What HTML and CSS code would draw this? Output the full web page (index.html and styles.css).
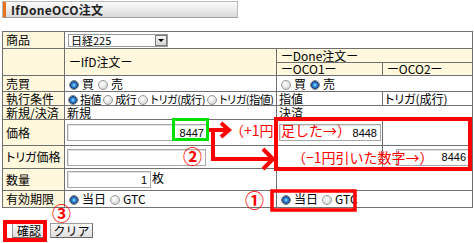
FILE: index.html
```html
<!DOCTYPE html>
<html lang="ja">
<head>
<meta charset="utf-8">
<title>IfDoneOCO注文</title>
<link rel="stylesheet" href="styles.css">
</head>
<body>
<div class="page">
  <div class="titlebar"><span class="title">IfDoneOCO注文</span></div>

  <table class="order">
    <colgroup>
      <col class="c-label"><col class="c-ifd"><col class="c-oco1"><col class="c-oco2">
    </colgroup>
    <tr class="r-item">
      <th>商品</th>
      <td colspan="3"><div class="select"><span class="sel-text">日経225</span><span class="sel-btn"><span class="tri"></span></span></div></td>
    </tr>
    <tr class="r-h1">
      <th rowspan="2"></th>
      <td rowspan="2" class="hd">ーIfD注文ー</td>
      <td colspan="2" class="hd">ーDone注文ー</td>
    </tr>
    <tr class="r-h2">
      <td class="hd">ーOCO1ー</td>
      <td class="hd">ーOCO2ー</td>
    </tr>
    <tr class="r-side">
      <th>売買</th>
      <td><span class="radio on"></span><span class="opt">買</span><span class="radio"></span><span class="opt">売</span></td>
      <td colspan="2"><span class="radio"></span><span class="opt">買</span><span class="radio on"></span><span class="opt">売</span></td>
    </tr>
    <tr class="r-exec">
      <th>執行条件</th>
      <td class="tight"><span class="radio on"></span><span class="opt">指値</span><span class="radio"></span><span class="opt">成行</span><span class="radio"></span><span class="opt">トリガ(成行)</span><span class="radio"></span><span class="opt">トリガ(指値)</span></td>
      <td>指値</td>
      <td>トリガ(成行)</td>
    </tr>
    <tr class="r-new">
      <th>新規/決済</th>
      <td>新規</td>
      <td colspan="2">決済</td>
    </tr>
    <tr class="r-price">
      <th>価格</th>
      <td><input class="num w-price" type="text" value="8447"></td>
      <td><input class="num w-oco1" type="text" value="8448"></td>
      <td></td>
    </tr>
    <tr class="r-trig">
      <th>トリガ価格</th>
      <td><input class="num w-trig" type="text" value=""></td>
      <td></td>
      <td class="right"><input class="num w-oco2" type="text" value="8446"></td>
    </tr>
    <tr class="r-qty">
      <th>数量</th>
      <td><input class="num w-qty" type="text" value="1"><span class="unit">枚</span></td>
      <td colspan="2"></td>
    </tr>
    <tr class="r-exp">
      <th>有効期限</th>
      <td><span class="radio on"></span><span class="opt">当日</span><span class="radio"></span><span class="opt">GTC</span></td>
      <td colspan="2"><span class="radio on"></span><span class="opt">当日</span><span class="radio"></span><span class="opt">GTC</span></td>
    </tr>
  </table>

  <div class="buttons">
    <button class="btn btn-ok" type="button">確認</button>
    <button class="btn btn-clear" type="button">クリア</button>
  </div>
</div>

<svg class="marks" width="474" height="243" viewBox="0 0 474 243">
  <rect x="173.5" y="119.5" width="34" height="20" fill="none" stroke="#00e000" stroke-width="3"/>
  <polyline points="209,130 229,130" fill="none" stroke="#ff0000" stroke-width="4"/>
  <polyline points="221,123 229,130 221,137" fill="none" stroke="#ff0000" stroke-width="4"/>
  <polyline points="213,130 213,159 273,159" fill="none" stroke="#ff0000" stroke-width="4"/>
  <polyline points="263,149 273,159 263,169" fill="none" stroke="#ff0000" stroke-width="4"/>
  <rect x="276" y="119" width="194" height="50" fill="none" stroke="#ff0000" stroke-width="4"/>
  <rect x="272" y="191" width="83" height="19" fill="none" stroke="#ff0000" stroke-width="3.5"/>
  <rect x="5" y="222" width="40" height="18" fill="none" stroke="#ff0000" stroke-width="4"/>
</svg>
<span class="note n-plus">（+1円</span>
<span class="note n-plus2">足した→）</span>
<span class="note n-minus">（−1円引いた数字→）</span>
<span class="circ c1">①</span>
<span class="circ c2">②</span>
<span class="circ c3">③</span>
</body>
</html>
```
FILE: styles.css
```css
* { box-sizing: border-box; }
html, body { margin: 0; padding: 0; background: #fff; }
body {
  position: relative;
  width: 474px;
  height: 243px;
  overflow: hidden;
  font-family: "Noto Sans CJK JP", sans-serif;
  font-size: 12px;
  color: #000;
  font-feature-settings: "palt";
}
.page { padding: 1px 2px 0 2px; }

.titlebar {
  width: 236px;
  height: 17px;
  border: 1px solid #b8b8b8;
  border-bottom-color: #a0a0a0;
  background: linear-gradient(#fcfcfc, #d9d9d9);
  box-shadow: inset 3px 0 0 #e8731d;
  display: flex;
  align-items: center;
  padding-left: 8px;
}
.title { font-size: 12px; font-weight: bold; letter-spacing: 0.3px; color: #222; line-height: 1; padding-top: 1px; }

.order {
  margin-top: 13px;
  width: 470px;
  table-layout: fixed;
  border-collapse: collapse;
}
.c-label { width: 62px; }
.c-ifd { width: 212px; }
.c-oco1 { width: 106px; }
.c-oco2 { width: 90px; }

.order th, .order td {
  border: 1px solid #707070;
  padding: 0 2px;
  white-space: nowrap;
  vertical-align: middle;
  line-height: 12px;
}
.order th {
  background: #fff8dc;
  text-align: left;
  font-weight: normal;
  padding-left: 3px;
}
.order td.hd { background: #fff8dc; padding-left: 4px; }
.order td.right { text-align: right; padding-right: 2px; }
.order td.tight { font-size: 11px; letter-spacing: -0.4px; padding-right: 0; overflow: hidden; }
.order td.tight .radio { margin-left: 1px; }
.order td.tight .opt { margin-left: 2px; margin-right: 1px; }

.r-item th, .r-item td { height: 17px; }
.r-h1 td { height: 14px; }
.r-h2 td { height: 13px; }
.r-side th, .r-side td { height: 16px; }
.r-exec th, .r-exec td { height: 14px; }
.r-new th, .r-new td { height: 14px; }
.r-price th, .r-price td { height: 26px; }
.r-trig th, .r-trig td { height: 23px; }
.r-qty th, .r-qty td { height: 22px; }
.r-exp th, .r-exp td { height: 17px; }

.select {
  display: inline-flex;
  align-items: center;
  width: 100px;
  height: 13px;
  border: 1px solid #9a9a9a;
  background: #fff;
  margin-left: 1px;
  vertical-align: middle;
}
.sel-text { flex: 1; padding-left: 2px; font-size: 11px; line-height: 11px; }
.sel-btn {
  width: 12px;
  height: 11px;
  border: 1px solid #7a7a7a;
  background: linear-gradient(#f4f4f4, #d6d6d6);
  display: flex;
  align-items: center;
  justify-content: center;
}
.tri {
  width: 0; height: 0;
  border-left: 3px solid transparent;
  border-right: 3px solid transparent;
  border-top: 3px solid #000;
}

.radio {
  display: inline-block;
  width: 10px;
  height: 10px;
  border-radius: 50%;
  border: 1px solid #9a9a9a;
  background: radial-gradient(circle at 40% 35%, #ffffff 0, #e6e6e6 50%, #c4c4c4 100%);
  vertical-align: -1px;
  margin-left: 2px;
}
.radio.on {
  border-color: #8a8a8a;
  background: radial-gradient(circle at 50% 50%, #bfe4ff 0, #3a9be8 1.5px, #1d5fae 3px, #0f3a73 3.6px, #dcdcdc 4.2px);
}
.opt { margin-left: 3px; margin-right: 2px; }

input.num {
  font-family: "Liberation Sans", sans-serif;
  font-size: 11px;
  text-align: right;
  height: 17px;
  border: 1px solid #a8a8a8;
  box-shadow: inset 1px 1px 0 #e2e2e2;
  padding: 0 3px 0 2px;
  margin: 0;
  background: #fff;
  color: #000;
  vertical-align: middle;
}
.w-price { width: 141px; margin-left: 1px; }
.w-trig { width: 139px; margin-left: 1px; }
.w-qty { width: 84px; margin-left: 1px; }
.w-oco1 { width: 102px; height: 14px; font-size: 10px; }
.w-oco2 { width: 74px; height: 14px; font-size: 10px; }
.unit { margin-left: 1px; }

.buttons { display: flex; gap: 4px; padding: 15px 0 0 10px; }
.btn {
  font-family: "Noto Sans CJK JP", sans-serif;
  font-size: 12px;
  line-height: 12px;
  height: 15px;
  padding: 0;
  border: 1px solid #9c9c9c;
  border-right-color: #6a6a6a;
  border-bottom-color: #6a6a6a;
  background: linear-gradient(#fafafa, #dedede);
  color: #000;
}
.btn-ok { width: 34px; }
.btn-clear { width: 43px; }

.marks { position: absolute; left: 0; top: 0; pointer-events: none; }
.note {
  position: absolute;
  color: #ff0000;
  font-size: 14px;
  line-height: 14px;
  white-space: nowrap;
  font-feature-settings: normal;
}
.n-plus { left: 230px; top: 123px; }
.n-plus2 { left: 281px; top: 123px; }
.n-minus { left: 292px; top: 150px; }
.circ {
  position: absolute;
  color: #ff0000;
  font-size: 19px;
  line-height: 19px;
  font-weight: bold;
}
.c1 { left: 245px; top: 190px; }
.c2 { left: 183px; top: 146px; }
.c3 { left: 52px; top: 203px; }
```
